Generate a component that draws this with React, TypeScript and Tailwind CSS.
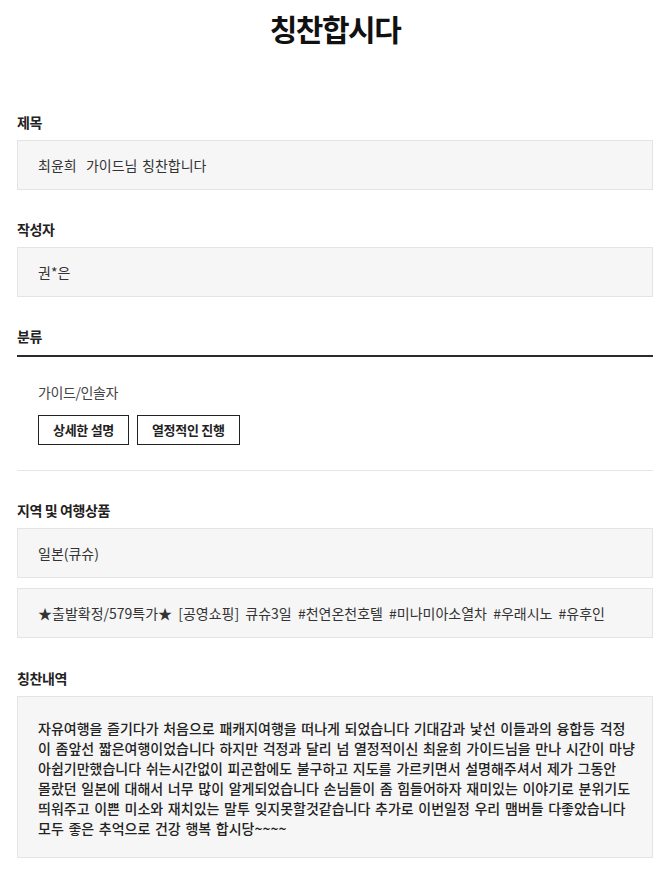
import React from 'react';

const FONT = "font-['Noto_Sans_CJK_KR','Noto_Sans',sans-serif]";

const Label: React.FC<{ children: React.ReactNode }> = ({ children }) => (
  <h3 className="text-[14px] leading-[18px] font-bold text-[#222] tracking-[-0.4px]">{children}</h3>
);

const Box: React.FC<{ children: React.ReactNode; className?: string }> = ({ children, className = '' }) => (
  <div
    className={`h-[50px] flex items-center px-[20px] bg-[#f6f6f6] border border-[#e4e4e4] text-[14px] text-[#333] [word-spacing:1.5px] ${className}`}
  >
    {children}
  </div>
);

const lines = [
  '자유여행을 즐기다가 처음으로 패캐지여행을 떠나게 되었습니다 기대감과 낯선 이들과의 융합등 걱정',
  '이 좀앞선 짧은여행이었습니다 하지만 걱정과 달리 넘 열정적이신 최윤희 가이드님을 만나 시간이 마냥',
  '아쉽기만했습니다 쉬는시간없이 피곤함에도 불구하고 지도를 가르키면서 설명해주셔서 제가 그동안',
  '몰랐던 일본에 대해서 너무 많이 알게되었습니다 손님들이 좀 힘들어하자 재미있는 이야기로 분위기도',
  '띄워주고 이쁜 미소와 재치있는 말투 잊지못할것같습니다 추가로 이번일정 우리 맴버들 다좋았습니다',
  '모두 좋은 추억으로 건강 행복 합시당~~~~',
];

export default function App() {
  return (
    <div className={`${FONT} bg-white w-full min-h-screen px-[17px] pb-[16px]`}>
      <h1 className="pt-[8px] text-[30px] leading-[40px] font-bold text-center text-[#111] tracking-[-1.5px]">
        칭찬합시다
      </h1>

      {/* 제목 */}
      <section className="mt-[65px]">
        <Label>제목</Label>
        <Box className="mt-[9px]">
          <span className="whitespace-pre">최윤희  가이드님 칭찬합니다</span>
        </Box>
      </section>

      {/* 작성자 */}
      <section className="mt-[30px]">
        <Label>작성자</Label>
        <Box className="mt-[9px]">권*은</Box>
      </section>

      {/* 분류 */}
      <section className="mt-[30px]">
        <div className="pb-[10px] border-b-2 border-[#2a2a2a]">
          <Label>분류</Label>
        </div>
        <div className="pl-[21px]">
          <p className="mt-[25px] text-[14px] leading-[20px] text-[#444] tracking-[-0.4px]">가이드/인솔자</p>
          <div className="mt-[13px] flex gap-[8px]">
            <span className="h-[30px] flex items-center px-[14px] border border-[#222] text-[13px] font-bold text-[#222] tracking-[-0.3px]">
              상세한 설명
            </span>
            <span className="h-[30px] flex items-center px-[14px] border border-[#222] text-[13px] font-bold text-[#222] tracking-[-0.3px]">
              열정적인 진행
            </span>
          </div>
        </div>
        <div className="mt-[25px] h-px bg-[#e6e6e6]" />
      </section>

      {/* 지역 및 여행상품 */}
      <section className="mt-[30px]">
        <Label>지역 및 여행상품</Label>
        <Box className="mt-[9px]">일본(큐슈)</Box>
        <Box className="mt-[10px] [word-spacing:3px]">
          ★출발확정/579특가★ [공영쇼핑] 큐슈3일 #천연온천호텔 #미나미아소열차 #우래시노 #유후인
        </Box>
      </section>

      {/* 칭찬내역 */}
      <section className="mt-[31px]">
        <Label>칭찬내역</Label>
        <div className="mt-[9px] px-[20px] pt-[21px] pb-[19px] bg-[#f6f6f6] border border-[#e4e4e4]">
          <p className="text-[14px] leading-[20px] font-medium text-[#222] [word-spacing:1.5px] whitespace-nowrap">
            {lines.map((line, i) => (
              <React.Fragment key={i}>
                {line}
                {i < lines.length - 1 && <br />}
              </React.Fragment>
            ))}
          </p>
        </div>
      </section>
    </div>
  );
}
